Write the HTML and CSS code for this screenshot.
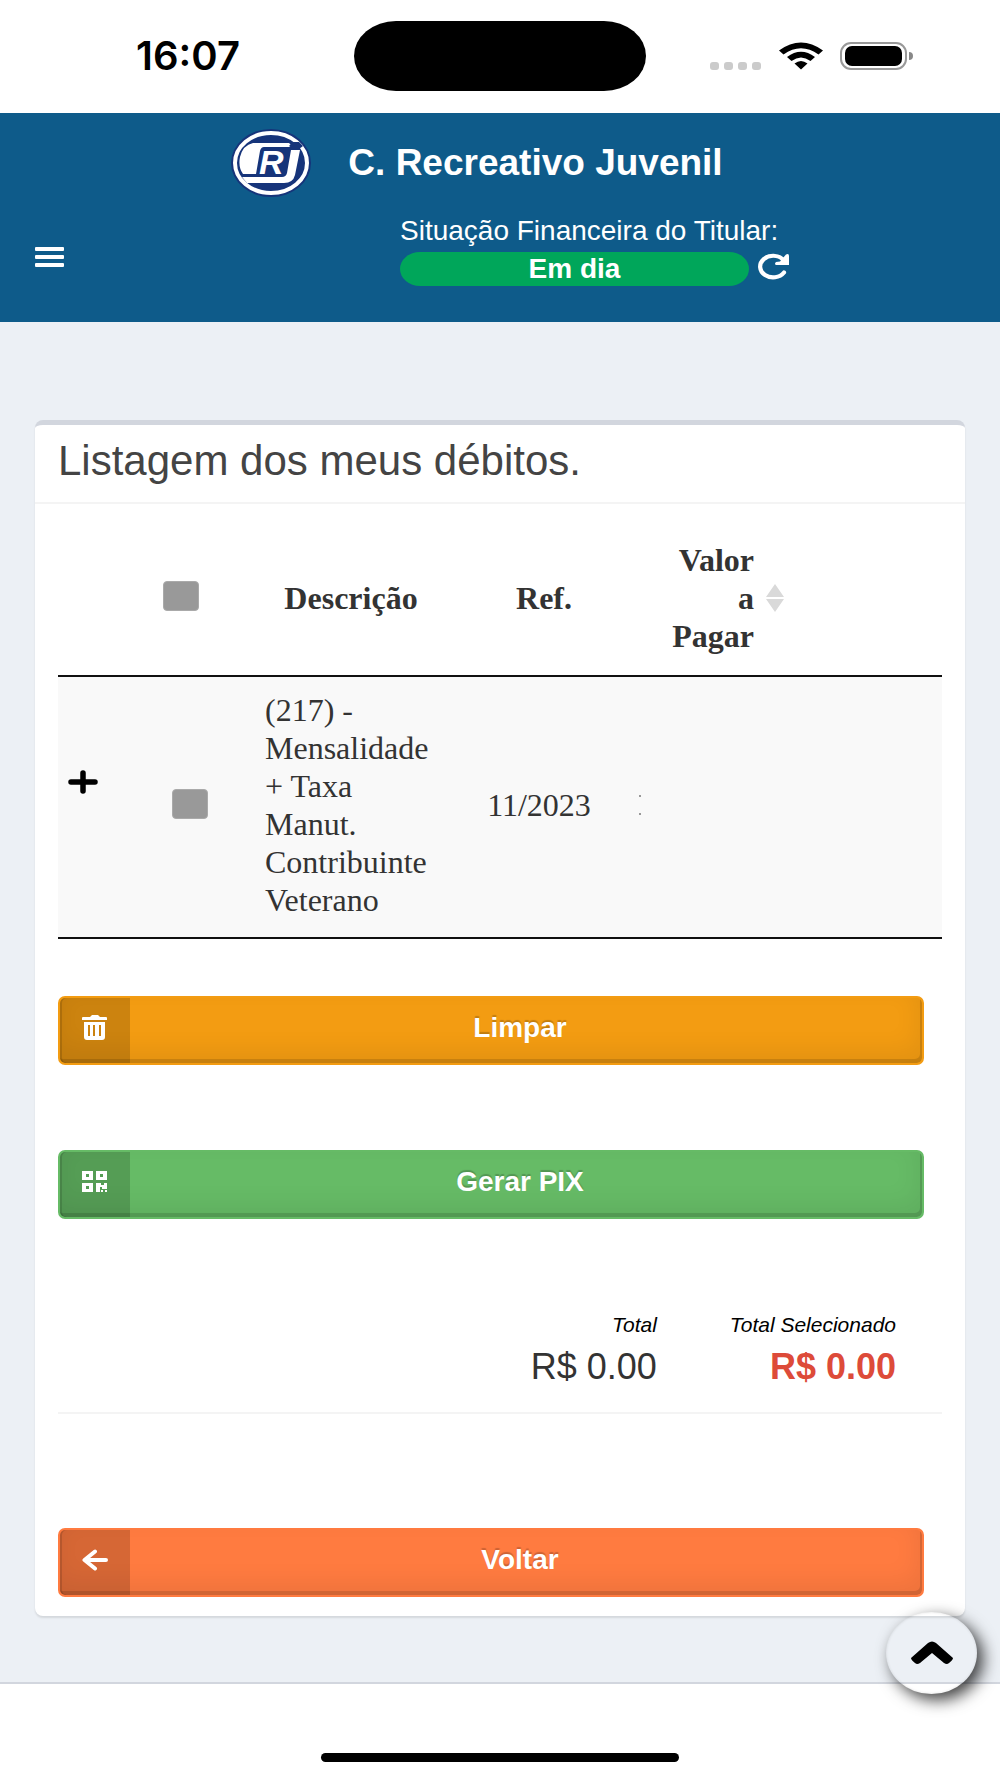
FILE: index.html
```html
<!DOCTYPE html>
<html lang="pt-BR">
<head>
<meta charset="utf-8">
<meta name="viewport" content="width=device-width, initial-scale=1">
<title>C. Recreativo Juvenil</title>
<link rel="stylesheet" href="styles.css">
</head>
<body>
<div class="status">
  <div class="status-time">16:07</div>
  <div class="island"></div>
  <div class="status-icons">
    <svg width="52" height="8" viewBox="0 0 52 8" fill="#cbcbcb"><rect width="9" height="8" rx="3"/><rect x="14" width="9" height="8" rx="3"/><rect x="28" width="9" height="8" rx="3"/><rect x="42" width="9" height="8" rx="3"/></svg>
    <svg width="46" height="28" viewBox="0 0 46 28"><path d="M1 8.500Q23-7.500 45 8.500L40.500 12.500Q23 0 5.500 12.500ZM9 15Q23 4.500 37 15L32.500 19Q23 12 13.500 19ZM16.500 21.500Q23 16.500 29.500 21.500L23 27.500Z"/></svg>
    <svg width="74" height="28" viewBox="0 0 74 28"><rect x="1" y="1" width="65" height="26" rx="10" fill="none" stroke="#999" stroke-width="2"/><rect x="5" y="4" width="57" height="20" rx="7"/><path d="M69 10Q73 10 73 14T69 18Z" fill="#888"/></svg>
  </div>
</div>

<header class="header">
  <div class="brand">
    <svg width="80" height="68" viewBox="0 0 80 68" aria-hidden="true">
      <ellipse cx="40" cy="34" rx="40" ry="34" fill="#16347a"/>
      <ellipse cx="40" cy="34" rx="36" ry="30" fill="none" stroke="#fff" stroke-width="4"/>
      <path d="M22 14H58L62 18H33Q30 18 29 22L25 45H12Q7 38 9 28Q12 16 22 14Z" fill="#fff"/>
      <path d="M11 48H51Q55 48 56 44L60 21H69L64 46Q62 54 53 54H16Z" fill="#fff"/>
      <text class="monogram" x="28" y="45">R</text>
      <path d="M58 17L62 13H68L72 17L68 20H62Z" fill="#16347a"/>
    </svg>
    <h1 class="brand-name">C. Recreativo Juvenil</h1>
  </div>
  <div class="header-row">
    <button class="icon-button menu" type="button" aria-label="Menu">
      <svg width="30" height="22" viewBox="0 0 30 22" fill="#fff"><rect width="29" height="4" rx="1"/><rect y="8" width="29" height="4" rx="1"/><rect y="16" width="29" height="4" rx="1"/></svg>
    </button>
    <div class="finance">
      <div class="finance-label">Situação Financeira do Titular:</div>
      <div class="finance-state">
        <span class="badge">Em dia</span>
        <button class="icon-button" type="button" aria-label="Atualizar">
          <svg width="34" height="32" viewBox="0 0 34 32"><path d="M27 19.500A13 10.800 0 1 1 26 6.500" fill="none" stroke="#fff" stroke-width="4.200" stroke-linecap="round"/><path d="M29 1.500Q32 0 32 3V12H19Q17 11 19 9L23 8.500Z" fill="#fff"/></svg>
        </button>
      </div>
    </div>
  </div>
</header>

<main class="content">
  <section class="card">
    <h2 class="card-title">Listagem dos meus débitos.</h2>
    <div class="card-body">
      <table class="debts">
        <colgroup><col class="col-more"><col class="col-check"><col class="col-desc"><col class="col-ref"><col></colgroup>
        <thead>
          <tr>
            <th></th>
            <th class="check-head"><input class="check" type="checkbox" aria-label="Selecionar todos"></th>
            <th>Descrição</th>
            <th>Ref.</th>
            <th><div class="sortable"><span class="sort-text">Valor a Pagar</span><svg width="20" height="28" viewBox="0 0 20 28" fill="#d9d9d9"><path d="M10 0L19 13H1ZM10 28L1 15H19Z"/></svg></div></th>
          </tr>
        </thead>
        <tbody>
          <tr>
            <td class="more"><button class="icon-button" type="button" aria-label="Detalhes"><svg width="30" height="24" viewBox="0 0 30 24"><path d="M3 12H27M15 3V21" stroke="#000" stroke-width="5.500" stroke-linecap="round"/></svg></button></td>
            <td class="check-cell"><input class="check" type="checkbox" aria-label="Selecionar débito"></td>
            <td class="desc">(217) - Mensalidade + Taxa Manut. Contribuinte Veterano</td>
            <td class="ref">11/2023</td>
            <td class="value"><svg width="2" height="20" viewBox="0 0 2 20" fill="#999"><rect width="2" height="2"/><rect y="18" width="2" height="2"/></svg></td>
          </tr>
        </tbody>
      </table>

      <button class="action clear" type="button">
        <span class="action-icon"><svg width="26" height="26" viewBox="0 0 26 26" fill="#fff"><path fill-rule="evenodd" d="M1 2H8L10 0H16L18 2H24Q25 2 25 3V5H0V3Q0 2 1 2ZM2 7H23V22Q23 25 20 25H5Q2 25 2 22ZM6 10V21H8V10ZM11 10V21H13V10ZM17 10V21H19V10Z"/></svg></span>
        <span class="action-label">Limpar</span>
      </button>
      <button class="action pix" type="button">
        <span class="action-icon"><svg width="26" height="22" viewBox="0 0 26 22" fill="#fff"><path fill-rule="evenodd" d="M0 0H11V9H0ZM4 3V6H7V3ZM14 0H25V9H14ZM18 3V6H21V3ZM0 12H11V21H0ZM4 15V18H7V15ZM14 12H19V14H22V12H25V18H20V16H18V21H14ZM19 19H21V21H19ZM23 19H25V21H23Z"/></svg></span>
        <span class="action-label">Gerar PIX</span>
      </button>

      <dl class="totals">
        <div><dt>Total</dt><dd>R$ 0.00</dd></div>
        <div class="selected"><dt>Total Selecionado</dt><dd>R$ 0.00</dd></div>
      </dl>

      <button class="action back" type="button">
        <span class="action-icon"><svg width="26" height="22" viewBox="0 0 26 22"><path d="M13 2.500L2.500 11L13 19.500M3 11H24" fill="none" stroke="#fff" stroke-width="4" stroke-linecap="round" stroke-linejoin="round"/></svg></span>
        <span class="action-label">Voltar</span>
      </button>
    </div>
  </section>
</main>

<footer class="footer"><div class="home-bar"></div></footer>
<button class="to-top" type="button" aria-label="Voltar ao topo">
  <svg width="42" height="24" viewBox="0 0 42 24"><path d="M0 17L17 2Q21-1 25 2L42 17Q42 19 38 22Q36 24 33 22L21 12L9 22Q6 24 4 22Q0 19 0 17Z"/></svg>
</button>
</body>
</html>
```
FILE: styles.css
```css
* { box-sizing: border-box; }

body {
  margin: 0;
  background: #fff;
  color: #333;
  font-family: "Liberation Sans", Arial, sans-serif;
}

svg { display: block; flex: none; }
h1, h2, dl, dd { margin: 0; }
button { font-family: inherit; cursor: pointer; }

.icon-button {
  padding: 0;
  border: 0;
  background: none;
}

/* Status bar */
.status {
  display: grid;
  grid-template-columns: 1fr 292px 1fr;
  align-items: center;
  height: 113px;
  padding-bottom: 1px;
}
.status-time {
  padding-left: 22px;
  color: #000;
  font: 600 40px/44px Inter, sans-serif;
  text-align: center;
}
.island {
  height: 70px;
  border-radius: 42px / 35px;
  background: #000;
}
.status-icons {
  display: flex;
  align-items: flex-end;
  justify-content: flex-end;
  gap: 16px;
  padding-right: 86px;
}

/* Header */
.header {
  height: 209px;
  padding: 16px 35px 0;
  background: #0e5b8a;
  color: #fff;
}
.brand {
  display: flex;
  align-items: center;
  justify-content: center;
  gap: 37px;
  padding-right: 46px;
}
.brand-name { font-size: 37px; line-height: 44px; }
.monogram {
  fill: #fff;
  stroke: #16347a;
  stroke-width: 3px;
  paint-order: stroke;
  font: italic bold 34px "Liberation Sans", sans-serif;
}
.header-row {
  display: flex;
  align-items: flex-end;
  justify-content: space-between;
  padding-right: 174px;
}
.menu { padding-bottom: 17px; }
.finance { margin-top: 15px; }
.finance-label { padding-bottom: 2px; font-size: 28px; line-height: 38px; }
.finance-state { display: flex; align-items: center; gap: 8px; }
.badge {
  width: 349px;
  border-radius: 20px / 17px;
  background: #00a65a;
  font-size: 28px;
  font-weight: bold;
  line-height: 34px;
  text-align: center;
}

/* Card */
.content {
  padding: 98px 35px 66px;
  border-bottom: 2px solid #d2d6de;
  background: #ecf0f5;
}
.card {
  border-top: 5px solid #d2d6de;
  border-radius: 8px;
  background: #fff;
  box-shadow: 0 2px 2px rgba(0, 0, 0, .1);
}
.card-title {
  padding: 12px 23px 17px;
  border-bottom: 2px solid #f4f4f4;
  color: #444;
  font-size: 42px;
  font-weight: normal;
  line-height: 48px;
}
.card-body { padding: 23px 23px 19px; }

/* Debts table */
.debts {
  width: 100%;
  margin-bottom: 57px;
  border-collapse: collapse;
  border-bottom: 2px solid #111;
  table-layout: fixed;
  font: 32px/38px "Liberation Serif", "Times New Roman", serif;
}
.col-more { width: 90px; }
.col-check { width: 84px; }
.col-desc { width: 238px; }
.col-ref { width: 148px; }
.debts th {
  padding: 14px 0 20px;
  border-bottom: 2px solid #111;
}
.debts .check-head { padding: 0 18px 18px 0; }
.debts td {
  padding: 14px 0 18px;
  background: #f9f9f9;
}
.debts .check-cell { padding-bottom: 28px; text-align: center; }
.debts .desc { padding-right: 30px; padding-left: 33px; }
.debts .more { padding: 0 0 48px 10px; }
.debts .ref { padding-right: 10px; text-align: center; }
.debts .value { padding-left: 21px; }
.check {
  width: 36px;
  height: 30px;
  margin: 0;
  appearance: none;
  border: 1px solid #aaa;
  border-radius: 4px;
  background: #999;
  vertical-align: middle;
}
.sortable {
  display: flex;
  align-items: center;
  gap: 11px;
  padding-left: 40px;
}
.sort-text { width: 96px; text-align: right; }

/* Action buttons */
.action {
  display: flex;
  width: calc(100% - 18px);
  height: 69px;
  padding: 0;
  overflow: hidden;
  border: 2px solid;
  border-radius: 7px;
  box-shadow: inset -2px -4px 0 rgba(0, 0, 0, .13), inset 2px 0 0 rgba(0, 0, 0, .13), inset -4px -12px 24px rgba(0, 0, 0, .07);
  color: #fff;
  font-size: 28px;
  font-weight: bold;
  line-height: 32px;
  text-shadow: 0 -2px 1px rgba(0, 0, 0, .2);
}
.action-icon {
  display: flex;
  align-items: center;
  justify-content: center;
  width: 70px;
  height: 100%;
  padding-bottom: 6px;
  background: rgba(0, 0, 0, .16);
}
.action-label {
  flex: 1;
  align-self: center;
  padding: 0 12px 6px 0;
}
.clear { border-color: #f39c12; background-color: #f39c12; }
.pix { margin-top: 85px; border-color: #66bb66; background-color: #66bb66; }
.back { border-color: #ff7b40; background-color: #ff7b40; }

/* Totals */
.totals {
  display: flex;
  justify-content: flex-end;
  gap: 73px;
  margin: 94px 0 114px;
  padding: 0 46px 25px 0;
  border-bottom: 2px solid #f4f4f4;
  text-align: right;
}
.totals dt {
  color: #000;
  font-size: 21px;
  font-style: italic;
  line-height: 24px;
}
.totals dd { margin-top: 10px; font-size: 36px; line-height: 40px; }
.selected dd { color: #dd4b39; font-weight: bold; }

/* Footer */
.footer { padding: 69px 0 16px; }
.home-bar {
  width: 358px;
  height: 9px;
  margin: 0 auto;
  border-radius: 5px;
  background: #000;
}
.to-top {
  position: fixed;
  right: 23px;
  bottom: 84px;
  display: flex;
  align-items: center;
  justify-content: center;
  width: 91px;
  height: 82px;
  padding: 0;
  border: 0;
  border-radius: 50%;
  background: none;
  box-shadow: 6px 6px 16px rgba(0, 0, 0, .75), inset 0 0 3px rgba(0, 0, 0, .12);
}
```
